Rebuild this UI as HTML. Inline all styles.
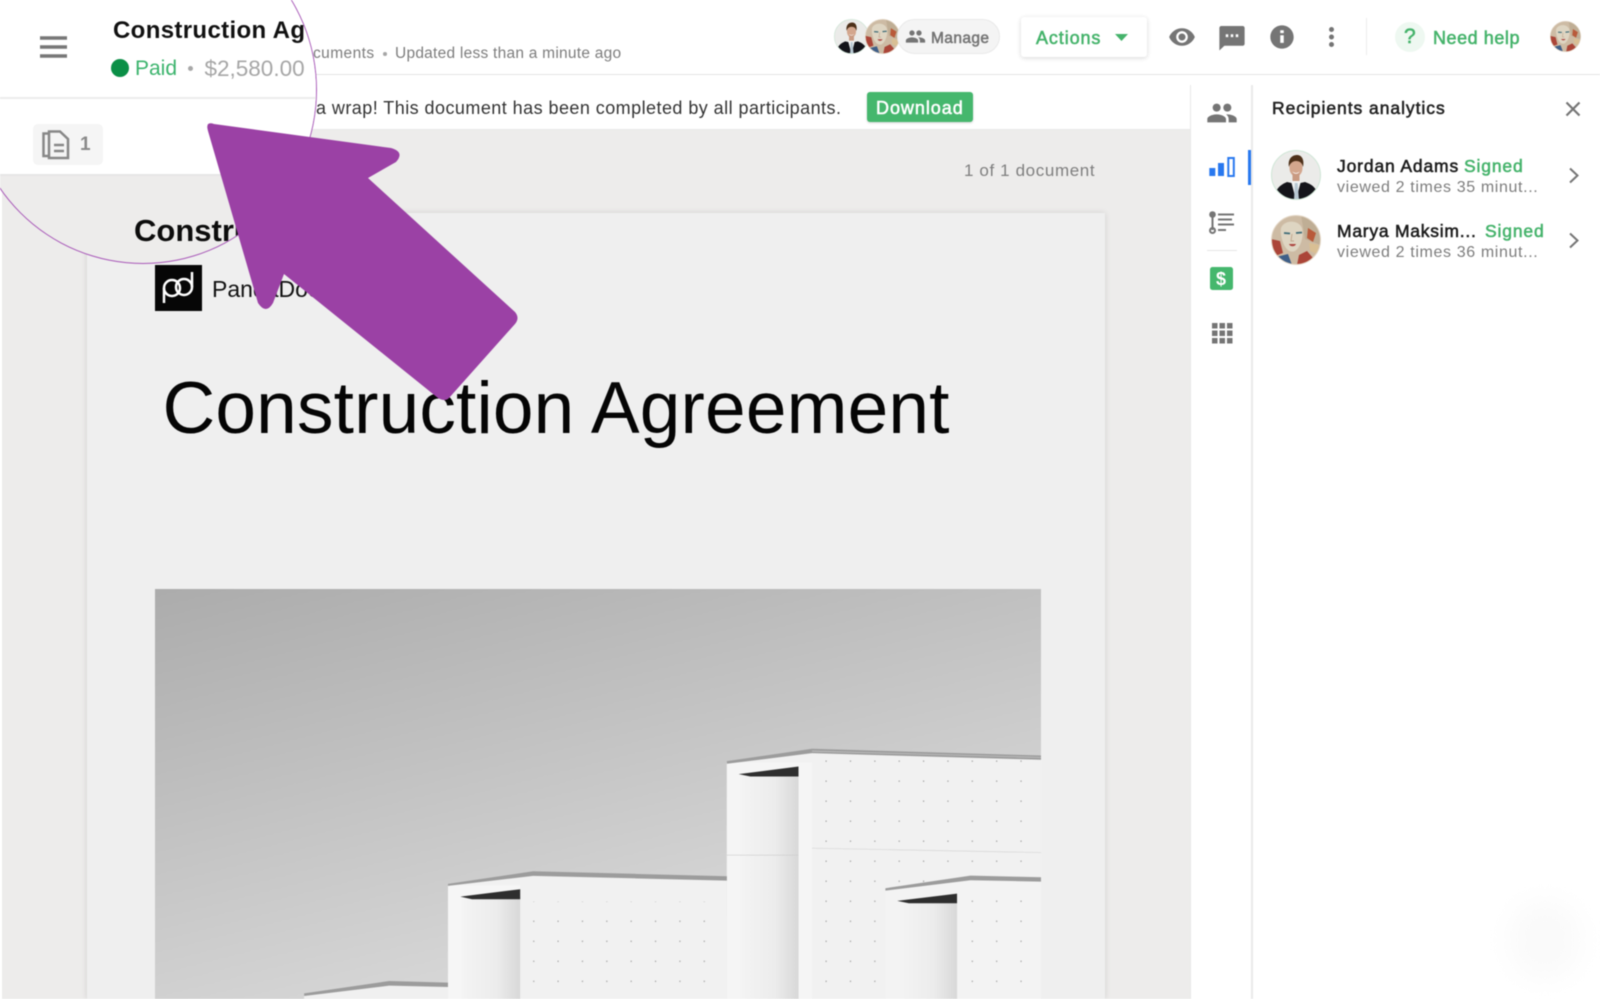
<!DOCTYPE html>
<html><head><meta charset="utf-8"><title>Construction Agreement</title>
<style>
html,body{margin:0;padding:0;width:1600px;height:999px;overflow:hidden;background:#fff}
body{font-family:"Liberation Sans",sans-serif;position:relative}
#w{position:absolute;left:0;top:0;width:1600px;height:999px;overflow:hidden;filter:blur(.4px)}
.a{position:absolute}
.t{position:absolute;white-space:nowrap;line-height:24px;height:24px}
.m{-webkit-text-stroke:.55px currentColor}
.g{color:#45b36b}
svg{position:absolute;display:block}
</style></head><body><div id="w">
<svg width="0" height="0" style="position:absolute"><defs>
<clipPath id="cc"><circle cx="25" cy="25" r="24.5"/></clipPath>
<symbol id="man" viewBox="0 0 50 50"><g clip-path="url(#cc)"><rect width="50" height="50" fill="#ebebe9"/>
<path d="M3 50c1-11 6-15 13-18l9 2 9-2c9 3 13 8 14 18z" fill="#14141a"/>
<path d="M20 31l5 19 5-19-5-2z" fill="#f0f2f2"/><path d="M23.800 33h2.800l1.400 17h-5z" fill="#b7c7d2"/>
<ellipse cx="25" cy="18" rx="6.500" ry="8.500" fill="#d3a68d"/><rect x="21.500" y="23" width="7" height="8" fill="#c99a82"/>
<path d="M18 17c-1.500-8 3-12 8-12 5 0 7.500 5 6 12-1-4-3-6-7-6-3 0-6 2-7 6z" fill="#4d3019"/>
<path d="M21.500 21.500c2 2 5 2 7 0-1 3-6 3-7 0z" fill="#fff"/></g>
<circle cx="25" cy="25" r="24.500" fill="none" stroke="#cfe6d6"/></symbol>
<symbol id="wom" viewBox="0 0 50 50"><g clip-path="url(#cc)"><rect width="50" height="50" fill="#cdbba4"/>
<path d="M30 0h20v30L34 24z" fill="#bfae95"/><path d="M37 13l8 5-3 9-6-4z" fill="#b95a3a"/>
<path d="M0 24l9 2 3 12-8 3z" fill="#ab4538"/><path d="M5 42l12-3 4 11H8z" fill="#3f5f88"/><path d="M28 40l8-4 6 7-7 7H26z" fill="#ab4538"/><path d="M38 28l10 2-2 9-7-3z" fill="#d9bf94"/>
<path d="M10 13c3-8 17-9 21 0 2 8-1 19-7 23-5 2-8-1-11-6-2-5-4-11-3-17z" fill="#ded5c2"/>
<path d="M13 18l6 .5M25 18l6-.5" stroke="#3f6c78" stroke-width="1.800"/><path d="M18 29h7c-1 3-6 3-7 0z" fill="#ac4540"/><path d="M21 19l-1 7h3" fill="none" stroke="#c2a890"/></g>
<circle cx="25" cy="25" r="24.500" fill="none" stroke="#e3d6c5"/></symbol>
<symbol id="ppl" viewBox="0 0 24 24"><path fill="#757575" d="M16 11c1.660 0 2.990-1.340 2.990-3S17.660 5 16 5c-1.660 0-3 1.340-3 3s1.340 3 3 3zm-8 0c1.660 0 2.990-1.340 2.990-3S9.660 5 8 5C6.340 5 5 6.340 5 8s1.340 3 3 3zm0 2c-2.330 0-7 1.170-7 3.500V19h14v-2.500c0-2.330-4.670-3.500-7-3.500zm8 0c-.290 0-.620.020-.970.050 1.160.840 1.970 1.970 1.970 3.450V19h6v-2.500c0-2.330-4.670-3.500-7-3.500z"/></symbol>
<pattern id="dots" width="41.500" height="60" patternUnits="userSpaceOnUse" x="1168" y="602"><rect x="0" y="0" width="2" height="4" fill="#a0a0a0"/></pattern>
<linearGradient id="rec" x1="0" x2="1" y1="0" y2="0"><stop offset="0" stop-color="#f4f4f4"/><stop offset=".6" stop-color="#ececec"/><stop offset="1" stop-color="#d8d8d8"/></linearGradient>
<linearGradient id="sky" x1="0" y1="0" x2=".55" y2="1"><stop offset="0" stop-color="#acacac"/><stop offset=".5" stop-color="#c4c4c4"/><stop offset="1" stop-color="#dcdcdc"/></linearGradient>
</defs></svg>

<!-- document area -->
<div class="a" style="left:2px;top:130px;width:1189px;height:869px;background:#edeceb"></div>
<div class="a" style="left:87px;top:213px;width:1018px;height:786px;background:#efefef;box-shadow:0 0 6px rgba(0,0,0,.12)"></div>
<div class="t" style="left:964px;top:159px;font-size:17px;color:#7f7f7f;letter-spacing:.62px">1 of 1 document</div>

<div class="a" style="left:155px;top:265px;width:47px;height:46px;background:#060606"></div>
<svg style="left:155px;top:265px" width="47" height="46" viewBox="0 0 47 46"><g fill="none" stroke="#fff" stroke-width="2.500"><circle cx="17" cy="23" r="8"/><circle cx="29" cy="22" r="8"/><path d="M9 23v15M37 22V7"/></g></svg>
<div class="t" style="left:212px;top:277px;font-size:23px;color:#111">PandaDoc</div>
<div class="t" style="left:162.500px;top:369px;font-size:73px;line-height:80px;height:80px;color:#050505;letter-spacing:.18px">Construction Agreement</div>

<!-- photo -->
<svg style="left:155px;top:589px" width="886" height="410" viewBox="26 28 1509 1229" preserveAspectRatio="none">
<rect x="26" y="28" width="1509" height="1229" fill="url(#sky)"/>
<!-- tall block -->
<path d="M1000 548L1145 512 1535 535V1257H1000z" fill="#f1f1f1"/>
<rect x="1145" y="530" width="390" height="727" fill="url(#dots)"/>
<rect x="1000" y="548" width="145" height="709" fill="#f5f5f5"/>
<rect x="1022" y="585" width="100" height="672" fill="url(#rec)"/>
<path d="M1020 583L1122 560V590H1040z" fill="#2e2e2e"/>
<path d="M1000 544L1145 507 1535 527V540L1145 520 1000 552z" fill="#9c9c9c"/>
<path d="M1145 514L1535 533" stroke="#c9c9c9" stroke-width="2"/>
<path d="M1000 826H1122" stroke="#ccc" stroke-width="2"/><path d="M1145 805L1535 818" stroke="#d6d6d6" stroke-width="2"/>
<!-- middle block -->
<path d="M525 916L670 880 1000 897V1257H525z" fill="#f1f1f1"/>
<rect x="670" y="965" width="330" height="292" fill="url(#dots)"/>
<rect x="525" y="916" width="123" height="341" fill="#f6f6f6"/>
<rect x="548" y="952" width="100" height="305" fill="url(#rec)"/>
<path d="M546 950L648 928V958H566z" fill="#2e2e2e"/>
<path d="M525 912L670 874 1000 889V902L670 888 525 918z" fill="#9c9c9c"/>
<!-- right block -->
<path d="M1270 930L1415 895 1535 900V1257H1270z" fill="#f3f3f3"/>
<rect x="1415" y="960" width="120" height="297" fill="url(#dots)"/>
<rect x="1292" y="965" width="100" height="292" fill="url(#rec)"/>
<path d="M1290 963L1392 941V970H1310z" fill="#2e2e2e"/>
<path d="M1270 925L1415 887 1535 892V905L1415 901 1270 932z" fill="#9c9c9c"/>
<!-- low block -->
<path d="M280 1245L425 1210 525 1214V1257H280z" fill="#f0f0f0"/>
<path d="M280 1240L425 1203 525 1208V1221L425 1217 280 1248z" fill="#9c9c9c"/>
</svg>

<!-- header -->
<div class="a" style="left:0;top:0;width:1600px;height:74px;background:#fff;border-bottom:1.500px solid #e4e4e4"></div>
<div class="t" style="left:313px;top:42px;font-size:15.500px;color:#7d7d7d;letter-spacing:.42px">cuments</div>
<div class="a" style="left:383px;top:52px;width:4px;height:4px;border-radius:50%;background:#a5a5a5"></div>
<div class="t" style="left:395px;top:41.500px;font-size:15.500px;color:#7d7d7d;letter-spacing:.25px">Updated less than a minute ago</div>

<svg style="left:834px;top:19px" width="35" height="35"><use href="#man" width="35" height="35"/></svg>
<svg style="left:865px;top:19px" width="35" height="35"><use href="#wom" width="35" height="35"/></svg>
<div class="a" style="left:897px;top:19px;width:103px;height:35px;box-sizing:border-box;border-radius:18px;background:#f4f4f4;border:1px solid #e9e9e9"></div>
<svg style="left:905px;top:26px" width="21" height="21" viewBox="0 0 24 24"><use href="#ppl" width="24" height="24"/></svg>
<div class="t m" style="left:931px;top:26.500px;font-size:15.500px;color:#757575;letter-spacing:.4px">Manage</div>

<div class="a" style="left:1021px;top:17px;width:126px;height:40px;background:#fff;border-radius:3px;box-shadow:0 1px 5px rgba(0,0,0,.16)"></div>
<div class="t m g" style="left:1036px;top:26px;font-size:18px;letter-spacing:.9px">Actions</div>
<svg style="left:1115px;top:34px" width="13" height="7"><path d="M0 0H13L6.500 7z" fill="#45b36b"/></svg>

<svg style="left:1167.500px;top:23px" width="28" height="28" viewBox="0 0 24 24"><path fill="#757575" d="M12 4.500C7 4.500 2.730 7.610 1 12c1.730 4.390 6 7.500 11 7.500s9.270-3.110 11-7.500c-1.730-4.390-6-7.500-11-7.500zM12 17c-2.760 0-5-2.240-5-5s2.240-5 5-5 5 2.240 5 5-2.240 5-5 5zm0-8c-1.660 0-3 1.340-3 3s1.340 3 3 3 3-1.340 3-3-1.340-3-3-3z"/></svg>
<svg style="left:1216.500px;top:23px" width="30" height="28" viewBox="0 0 24 22.400"><path fill="#757575" d="M20.500 2.400H3.500c-1 0-1.600.7-1.600 1.600v18l4-3.800h14.600c1 0 1.600-.7 1.600-1.600V4c0-.9-.6-1.600-1.600-1.600zM9 11.300H7V9h2zm4 0h-2V9h2zm4 0h-2V9h2z"/></svg>
<svg style="left:1268px;top:23px" width="28" height="28" viewBox="0 0 24 24"><path fill="#757575" d="M12 2C6.480 2 2 6.480 2 12s4.480 10 10 10 10-4.480 10-10S17.520 2 12 2zm1.500 15h-3v-6.500h3V17zm0-8.300h-3V6.200h3v2.500z"/></svg>
<div class="a" style="left:1329px;top:27px;width:5px;height:5px;border-radius:50%;background:#757575;box-shadow:0 7.500px 0 #757575,0 15px 0 #757575"></div>
<div class="a" style="left:1366px;top:18px;width:1px;height:37px;background:#ececec"></div>
<div class="a" style="left:1395px;top:22px;width:30px;height:30px;border-radius:50%;background:#eef8f1"></div>
<div class="t m g" style="left:1404px;top:25px;font-size:21px">?</div>
<div class="t m g" style="left:1433px;top:26px;font-size:18px;letter-spacing:.55px">Need help</div>
<svg style="left:1550px;top:21px" width="31" height="31"><use href="#wom" width="31" height="31"/></svg>

<!-- banner -->
<div class="a" style="left:0;top:75px;width:1191px;height:55px;background:#fff;border-bottom:1.500px solid #e8e8e8;box-sizing:border-box"></div>
<div class="t" style="left:316px;top:96px;font-size:18px;color:#333;letter-spacing:.45px">a wrap! This document has been completed by all participants.</div>
<div class="a" style="left:866.500px;top:92px;width:106px;height:30px;background:#45b76d;border-radius:3px;box-shadow:0 1px 2px rgba(0,0,0,.18)"></div>
<div class="t m" style="left:876px;top:96px;font-size:18px;color:#fff;letter-spacing:.95px">Download</div>

<!-- rail + panel -->
<div class="a" style="left:1191px;top:75px;width:409px;height:924px;background:#fff"></div>
<div class="a" style="left:1190px;top:85px;width:1px;height:914px;background:#e9e9e9"></div>
<div class="a" style="left:1251px;top:85px;width:1.500px;height:914px;background:#eaeaea"></div>
<svg style="left:1205.500px;top:97px" width="32" height="32" viewBox="0 0 24 24"><use href="#ppl" width="24" height="24"/></svg>
<svg style="left:1205px;top:150px" width="32" height="30"><g fill="#2878ef"><rect x="4.300" y="18" width="6" height="8"/><rect x="13" y="13" width="6" height="13"/></g><rect x="23.300" y="8" width="5.500" height="18" fill="none" stroke="#2878ef" stroke-width="2"/></svg>
<div class="a" style="left:1248px;top:150px;width:2.500px;height:35px;background:#2878ef"></div>
<svg style="left:1205px;top:205px" width="32" height="32"><g fill="none" stroke="#757575" stroke-width="2"><path d="M7.500 12v13"/><circle cx="7.500" cy="25.500" r="2.500"/></g><circle cx="7.500" cy="9.500" r="3.300" fill="#757575"/><path d="M13 9.500h16M13 14.500h14M13 19.500h16M13 25h8" stroke="#757575" stroke-width="2"/></svg>
<div class="a" style="left:1207px;top:250px;width:30px;height:1px;background:#e6e6e6"></div>
<div class="a" style="left:1210px;top:267px;width:23px;height:23px;border-radius:2.500px;background:#45b76d"></div>
<div class="t" style="left:1216px;top:267px;font-size:18px;font-weight:bold;color:#fff">$</div>
<svg style="left:1211.500px;top:323px" width="21" height="21"><g fill="#757575"><rect width="5.500" height="5.500"/><rect x="7.500" width="5.500" height="5.500"/><rect x="15" width="5.500" height="5.500"/><rect y="7.500" width="5.500" height="5.500"/><rect x="7.500" y="7.500" width="5.500" height="5.500"/><rect x="15" y="7.500" width="5.500" height="5.500"/><rect y="15" width="5.500" height="5.500"/><rect x="7.500" y="15" width="5.500" height="5.500"/><rect x="15" y="15" width="5.500" height="5.500"/></g></svg>

<div class="t m" style="left:1272px;top:95.500px;font-size:17.500px;color:#222;letter-spacing:.95px">Recipients analytics</div>
<svg style="left:1564.500px;top:101px" width="16" height="16"><path d="M1.500 1.500L14.500 14.500M14.500 1.500L1.500 14.500" stroke="#757575" stroke-width="2.200"/></svg>

<svg style="left:1271px;top:150px" width="50" height="50"><use href="#man" width="50" height="50"/></svg>
<div class="t m" style="left:1337px;top:153.500px;font-size:17.500px;color:#1c1c1c;letter-spacing:.85px">Jordan Adams</div>
<div class="t m g" style="left:1464px;top:153.500px;font-size:17.500px;letter-spacing:.85px">Signed</div>
<div class="t" style="left:1337px;top:175.500px;font-size:16px;color:#7d7d7d;letter-spacing:.63px">viewed 2 times 35 minut...</div>
<svg style="left:1568px;top:166.500px" width="12" height="17"><path d="M2 1.500L9.500 8.500 2 15.500" fill="none" stroke="#757575" stroke-width="2"/></svg>

<svg style="left:1271px;top:215px" width="50" height="50"><use href="#wom" width="50" height="50"/></svg>
<div class="t m" style="left:1337px;top:218.500px;font-size:17.500px;color:#1c1c1c;letter-spacing:.75px">Marya Maksim...</div>
<div class="t m g" style="left:1485px;top:218.500px;font-size:17.500px;letter-spacing:.85px">Signed</div>
<div class="t" style="left:1337px;top:240.500px;font-size:16px;color:#7d7d7d;letter-spacing:.63px">viewed 2 times 36 minut...</div>
<svg style="left:1568px;top:231.500px" width="12" height="17"><path d="M2 1.500L9.500 8.500 2 15.500" fill="none" stroke="#757575" stroke-width="2"/></svg>

<div class="a" style="left:1510px;top:900px;width:70px;height:80px;border-radius:35px;background:#fafafa;filter:blur(12px)"></div>

<!-- magnifier -->
<div class="a" style="left:-30px;top:-83px;width:346px;height:346px;border-radius:50%;overflow:hidden;background:#edeceb;box-sizing:border-box;box-shadow:0 0 0 1px #a858b8">
 <div class="a" style="left:30px;top:83px;width:320px;height:180px">
  <div class="a" style="left:0;top:0;width:320px;height:175px;background:#fff"></div>
  <div class="a" style="left:0;top:97px;width:320px;height:2px;background:#ececec"></div>
  <div class="a" style="left:0;top:174px;width:320px;height:1.500px;background:#e6e6e6"></div>
  <div class="a" style="left:113px;top:14px;width:192px;height:34px;overflow:hidden"><div class="t" style="left:0;top:3px;height:28px;line-height:28px;font-size:24px;font-weight:bold;color:#111;letter-spacing:.35px">Construction Agreement</div></div>
  <div class="a" style="left:111px;top:59px;width:18px;height:18px;border-radius:50%;background:#0a8f46"></div>
  <div class="t" style="left:135px;top:57px;font-size:21px;color:#3cb46d">Paid</div>
  <div class="a" style="left:188px;top:66px;width:5px;height:5px;border-radius:50%;background:#a8a8a8"></div>
  <div class="t" style="left:204.500px;top:57px;font-size:22.500px;color:#a6a6a6">$2,580.00</div>
  <div class="a" style="left:33px;top:124px;width:70px;height:41px;background:#f5f5f5;border-radius:5px"></div>
  <svg style="left:41px;top:129px" width="30" height="32"><g fill="none" stroke="#878787" stroke-width="2.500"><path d="M8 4.500H2.500V27H8"/><path d="M8 2.500H19L27 10V29H8z" fill="#f5f5f5"/><path d="M13 16H23M13 22H23"/></g></svg>
  <div class="t" style="left:80px;top:133px;font-size:19px;font-weight:bold;color:#8a8a8a">1</div>
  <div class="t" style="left:134px;top:213px;height:36px;line-height:36px;font-size:31px;font-weight:bold;color:#0c0c0c">Construction</div>
 </div>
</div>

<!-- arrow -->
<svg style="left:0;top:0" width="600" height="450"><path fill="#9b41a5" d="M214 124L391 148Q405 152 396 162L368 178 515 312Q520 318 515 324L449 398Q445 402 438 398L284 274 273 303Q266 315 258 303L208 131Q205 121 214 124Z"/></svg>
<!-- hamburger -->
<svg style="left:40px;top:36px" width="27" height="22"><path d="M0 2H27M0 11H27M0 20H27" stroke="#777" stroke-width="3.500"/></svg>
</div></body></html>
